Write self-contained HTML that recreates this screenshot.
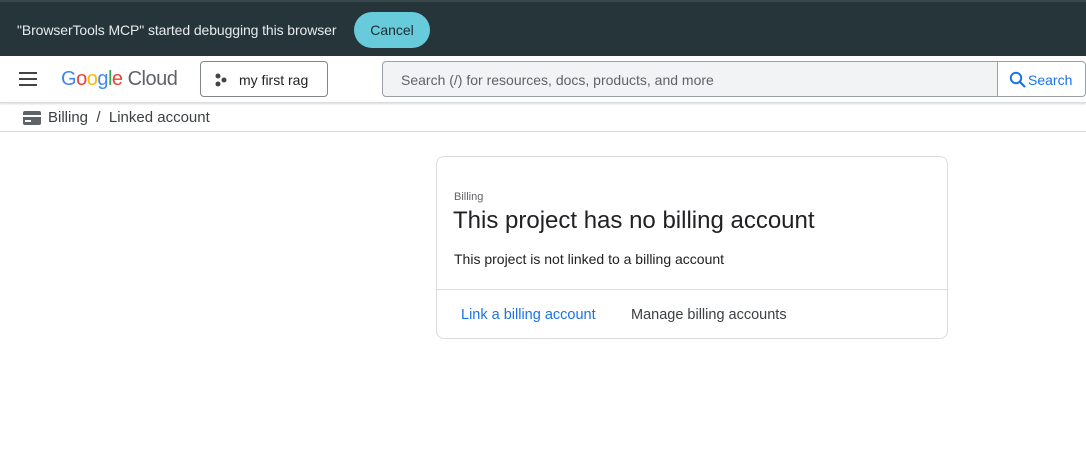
<!DOCTYPE html>
<html><head><style>
*{box-sizing:border-box;margin:0;padding:0}
body{width:1086px;height:453px;overflow:hidden;background:#fff;font-family:"Liberation Sans",Arial,sans-serif;position:relative;color:#202124}
.top{position:absolute;left:0;top:0;width:1086px;height:56px;background:#253539;border-top:2px solid #3a474b}
.top .msg{position:absolute;left:17px;top:20px;font-size:14px;letter-spacing:-.1px;color:#e8eaed}
.cancel{position:absolute;left:354px;top:10px;width:76px;height:36px;border-radius:18px;background:#67cbdb;color:#1f2c30;font-size:14px;text-align:center;line-height:36px}
.hdr{position:absolute;top:56px;left:0;width:1086px;height:47px;border-bottom:1px solid #dadce0;box-shadow:0 1px 2px rgba(0,0,0,.15)}
.ham{position:absolute;left:19px;top:16px;width:18px}
.ham i{display:block;height:2px;background:#444;margin-bottom:4px}
.logo{position:absolute;left:61px;top:12px;font-size:20px;letter-spacing:-.5px}
.proj{position:absolute;left:200px;top:5px;width:128px;height:36px;border:1px solid #80868b;border-radius:4px}
.proj span{position:absolute;left:38px;top:10px;font-size:14px}
.search{position:absolute;left:382px;top:5px;width:616px;height:36px;border:1px solid #9aa0a6;border-radius:4px 0 0 4px;background:#f1f3f4}
.search span{position:absolute;left:18px;top:10px;font-size:14px;color:#5f6368}
.sbtn{position:absolute;left:997px;top:5px;width:89px;height:36px;border:1px solid #9aa0a6;border-radius:0 4px 4px 0;background:#fff;color:#1a73e8;font-size:14px}
.crumb{position:absolute;top:104px;left:0;width:1086px;height:28px;border-bottom:1px solid #dadce0;font-size:15px;color:#3c4043}
.card{position:absolute;left:436px;top:156px;width:512px;height:183px;border:1px solid #dadce0;border-radius:8px}
</style></head><body>
<div class="top"><div class="msg">"BrowserTools MCP" started debugging this browser</div><div class="cancel">Cancel</div></div>
<div class="hdr">
<div class="ham"><i></i><i></i><i></i></div>
<div class="logo"><span style="color:#4285f4">G</span><span style="color:#ea4335">o</span><span style="color:#fbbc04">o</span><span style="color:#4285f4">g</span><span style="color:#34a853">l</span><span style="color:#ea4335">e</span> <span style="color:#5f6368">Cloud</span></div>
<div class="proj"><svg style="position:absolute;left:13px;top:11px" width="14" height="14"><circle cx="4" cy="3" r="2.5" fill="#444"/><circle cx="10" cy="7" r="2.5" fill="#444"/><circle cx="4" cy="11" r="2.5" fill="#444"/></svg><span>my first rag</span></div>
<div class="search"><span>Search (/) for resources, docs, products, and more</span></div>
<div class="sbtn"><svg style="position:absolute;left:11px;top:9px" width="18" height="18"><circle cx="7" cy="7" r="5.2" fill="none" stroke="#1a73e8" stroke-width="2"/><path d="M11 11l5 5" stroke="#1a73e8" stroke-width="2.2"/></svg><span style="position:absolute;left:30px;top:10px">Search</span></div>
</div>
<div class="crumb">
<svg style="position:absolute;left:23px;top:7px" width="18" height="14"><rect x="0" y="0" width="18" height="14" rx="2" fill="#5f6368"/><rect x="0" y="4" width="18" height="2" fill="#fff"/><rect x="2" y="9" width="6" height="2" fill="#fff"/></svg>
<span style="position:absolute;left:48px;top:5px">Billing &nbsp;/&nbsp; Linked account</span></div>
<div class="card">
<div style="position:absolute;left:17px;top:34px;font-size:11px;color:#5f6368">Billing</div>
<div style="position:absolute;left:16px;top:50px;font-size:24px;color:#202124">This project has no billing account</div>
<div style="position:absolute;left:17px;top:94px;font-size:14px">This project is not linked to a billing account</div>
<div style="position:absolute;left:0;top:132px;width:100%;border-top:1px solid #dadce0"></div>
<div style="position:absolute;left:24px;top:150px;font-size:14.5px;color:#1a73e8">Link a billing account</div>
<div style="position:absolute;left:194px;top:150px;font-size:14.5px;color:#3c4043">Manage billing accounts</div>
</div>
</body></html>
